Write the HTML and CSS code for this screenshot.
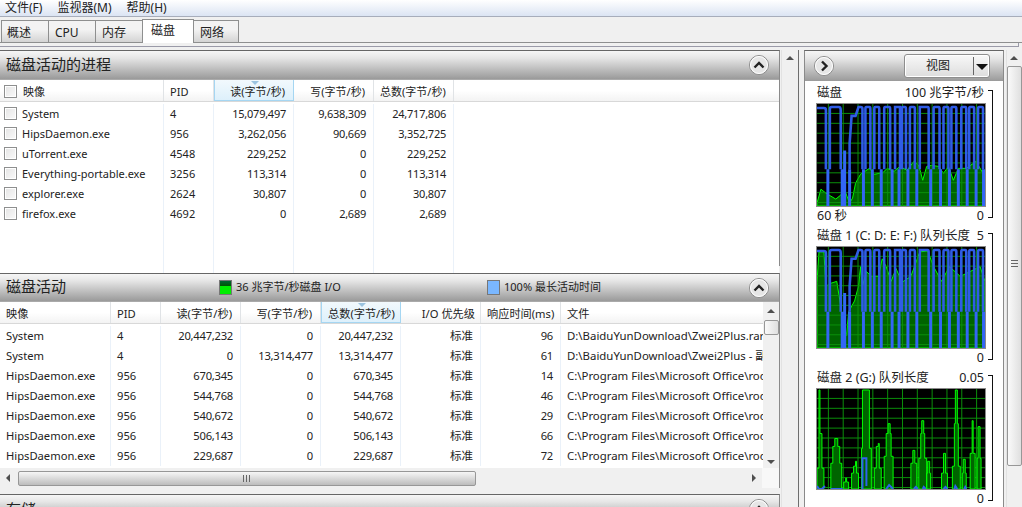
FILE: index.html
```html
<!DOCTYPE html>
<html lang="zh">
<head>
<meta charset="utf-8">
<title>资源监视器</title>
<link rel="stylesheet" href="styles.css">
</head>
<body>
<div class="app">
  <nav class="menu"><span>文件(F)</span><span>监视器(M)</span><span>帮助(H)</span></nav>
  <div class="tabs">
    <span class="tab">概述</span><span class="tab">CPU</span><span class="tab">内存</span><span class="tab active">磁盘</span><span class="tab">网络</span>
  </div>
  <div class="strip"></div>
  <div class="main">
    <div class="left">
      <section class="panel first">
        <header class="phead"><h2>磁盘活动的进程</h2>
          <svg class="circle" viewBox="0 0 20 20"><circle cx="10" cy="10" r="9.500" fill="#e6e6e6" stroke="#8c8c8c"/><circle cx="10" cy="10" r="8.500" fill="none" stroke="#fff"/><path d="M5.500 12.500 10 8 14.500 12.500" fill="none" stroke="#222" stroke-width="2.400"/></svg>
        </header>
        <div class="list procs">
          <div class="row hdr"><b class="c1"><i class="chk"></i>映像</b><b>PID</b><b class="r sorted">读(字节/秒)</b><b class="r">写(字节/秒)</b><b class="r">总数(字节/秒)</b><b></b></div>
          <div class="row"><span class="c1"><i class="chk"></i>System</span><span>4</span><span class="r">15,079,497</span><span class="r">9,638,309</span><span class="r">24,717,806</span><span></span></div>
          <div class="row"><span class="c1"><i class="chk"></i>HipsDaemon.exe</span><span>956</span><span class="r">3,262,056</span><span class="r">90,669</span><span class="r">3,352,725</span><span></span></div>
          <div class="row"><span class="c1"><i class="chk"></i>uTorrent.exe</span><span>4548</span><span class="r">229,252</span><span class="r">0</span><span class="r">229,252</span><span></span></div>
          <div class="row"><span class="c1"><i class="chk"></i>Everything-portable.exe</span><span>3256</span><span class="r">113,314</span><span class="r">0</span><span class="r">113,314</span><span></span></div>
          <div class="row"><span class="c1"><i class="chk"></i>explorer.exe</span><span>2624</span><span class="r">30,807</span><span class="r">0</span><span class="r">30,807</span><span></span></div>
          <div class="row"><span class="c1"><i class="chk"></i>firefox.exe</span><span>4692</span><span class="r">0</span><span class="r">2,689</span><span class="r">2,689</span><span></span></div>
          <div class="row fill"><span></span><span></span><span></span><span></span><span></span><span></span></div>
        </div>
      </section>
      <section class="panel second">
        <header class="phead"><h2>磁盘活动</h2>
          <div class="legend"><i class="sw green"></i>36 兆字节/秒磁盘 I/O</div>
          <div class="legend two"><i class="sw blue"></i>100% 最长活动时间</div>
          <svg class="circle" viewBox="0 0 20 20"><circle cx="10" cy="10" r="9.500" fill="#e6e6e6" stroke="#8c8c8c"/><circle cx="10" cy="10" r="8.500" fill="none" stroke="#fff"/><path d="M5.500 12.500 10 8 14.500 12.500" fill="none" stroke="#222" stroke-width="2.400"/></svg>
        </header>
        <div class="body2">
          <div class="list files">
            <div class="row hdr"><b>映像</b><b>PID</b><b class="r">读(字节/秒)</b><b class="r">写(字节/秒)</b><b class="r sorted">总数(字节/秒)</b><b class="r">I/O 优先级</b><b class="r">响应时间(ms)</b><b>文件</b></div>
            <div class="row"><span>System</span><span>4</span><span class="r">20,447,232</span><span class="r">0</span><span class="r">20,447,232</span><span class="r pri">标准</span><span class="r">96</span><span class="path">D:\BaiduYunDownload\Zwei2Plus.rar</span></div>
            <div class="row"><span>System</span><span>4</span><span class="r">0</span><span class="r">13,314,477</span><span class="r">13,314,477</span><span class="r pri">标准</span><span class="r">61</span><span class="path">D:\BaiduYunDownload\Zwei2Plus - 副本.rar</span></div>
            <div class="row"><span>HipsDaemon.exe</span><span>956</span><span class="r">670,345</span><span class="r">0</span><span class="r">670,345</span><span class="r pri">标准</span><span class="r">14</span><span class="path">C:\Program Files\Microsoft Office\root</span></div>
            <div class="row"><span>HipsDaemon.exe</span><span>956</span><span class="r">544,768</span><span class="r">0</span><span class="r">544,768</span><span class="r pri">标准</span><span class="r">46</span><span class="path">C:\Program Files\Microsoft Office\root</span></div>
            <div class="row"><span>HipsDaemon.exe</span><span>956</span><span class="r">540,672</span><span class="r">0</span><span class="r">540,672</span><span class="r pri">标准</span><span class="r">29</span><span class="path">C:\Program Files\Microsoft Office\root</span></div>
            <div class="row"><span>HipsDaemon.exe</span><span>956</span><span class="r">506,143</span><span class="r">0</span><span class="r">506,143</span><span class="r pri">标准</span><span class="r">66</span><span class="path">C:\Program Files\Microsoft Office\root</span></div>
            <div class="row"><span>HipsDaemon.exe</span><span>956</span><span class="r">229,687</span><span class="r">0</span><span class="r">229,687</span><span class="r pri">标准</span><span class="r">72</span><span class="path">C:\Program Files\Microsoft Office\root</span></div>
          </div>
          <div class="vbar inner"><i class="up"></i><i class="thumb small"></i><i class="down"></i></div>
        </div>
        <div class="hbar"><i class="lf"></i><i class="hthumb"><u></u></i><i class="rt"></i></div>
      </section>
      <section class="panel third">
        <header class="phead"><h2>存储</h2>
          <svg class="circle" viewBox="0 0 20 20"><circle cx="10" cy="10" r="9.500" fill="#e6e6e6" stroke="#8c8c8c"/><circle cx="10" cy="10" r="8.500" fill="none" stroke="#fff"/><path d="M5.500 12.500 10 8 14.500 12.500" fill="none" stroke="#222" stroke-width="2.400"/></svg>
        </header>
      </section>
    </div>
    <div class="vbar outer"><i class="up"></i></div>
    <aside class="right">
      <header class="rhead">
        <svg class="circle" viewBox="0 0 20 20"><circle cx="10" cy="10" r="9.500" fill="#e6e6e6" stroke="#8c8c8c"/><circle cx="10" cy="10" r="8.500" fill="none" stroke="#fff"/><path d="M8 5.500 12.500 10 8 14.500" fill="none" stroke="#222" stroke-width="2.400"/></svg>
        <div class="viewbtn"><span>视图</span><i class="tri"></i></div>
      </header>
      <div class="graphs">
        <div class="graph">
          <div class="lab"><span>磁盘</span><span>100 兆字节/秒</span></div>
          <div class="brk"></div>
          <svg class="chart h1" viewBox="0 0 170 103" preserveAspectRatio="none">
            <defs>
              <pattern id="grid" width="15" height="10" patternUnits="userSpaceOnUse"><path d="M11.500 0V10M0 9.500H15" fill="none" stroke="#0a8f0a"/></pattern>
              <g id="wave" fill="none" stroke="#2f5ce6" stroke-width="2.600">
                <path d="M0,4H7Q9,4 9,6V66M13,66V5Q13,3 15,3H22Q24,3 24,6V66M33,66V40L35,12H39L42,3H44Q46,3 46,5V66M49,66V5Q49,3 50,3H53Q54,3 54,5V66M58,66V5Q58,3 59,3H62Q63,3 63,5V66M68,66V5Q68,3 69,3H73Q74,3 74,5V66M79,66V3H84V66M86,66V5Q86,3 87,3H89Q90,3 90,5V66M94,66V5Q94,3 95,3H98Q99,3 99,5V66M104,66V3H112Q113,3 113,5V66M118,66V5Q118,3 119,3H123Q124,3 124,5V66M128,66V5Q128,3 129,3H132Q133,3 133,5V66M136,66V5Q136,3 137,3H140Q141,3 141,5V66M146,66V5Q146,3 147,3H150Q151,3 151,5V66M154,66V5Q154,3 155,3H158Q159,3 159,5V66M163,66V5Q163,3 164,3H167Q168,3 168,5V66"/>
                <path d="M11,66V103M25.500,66V103M28,47V103M33,66V103M47,66V103M56,66V103M65,66V103M76,66V103M83,66V103M92,66V103M101,66V103M115,66V103M125,66V103M134,66V103M143,66V103M152,66V103M161,66V103M168.500,66V103" stroke-width="3" stroke="#3366f5"/>
              </g>
            </defs>
            <rect class="bg" width="170" height="103"/>
            <polygon class="area" points="0,100 4,86 9,90 14,93 19,96 24,92 28,87 33,100 36,95 39,80 44,71 53,65 58,71 63,70 66,70 71,65 78,68 84,63 91,67 98,58 103,62 107,77 111,63 116,62 123,63 128,70 133,63 138,77 143,65 151,65 161,58 168,70 170,103 0,103"/>
            <rect width="170" height="103" fill="url(#grid)"/>
            <use href="#wave"/>
          </svg>
          <div class="lab foot"><span>60 秒</span><span>0</span></div>
        </div>
        <div class="graph">
          <div class="lab"><span>磁盘 1 (C: D: E: F:) 队列长度</span><span>5</span></div>
          <div class="brk"></div>
          <svg class="chart h2" viewBox="0 0 170 103" preserveAspectRatio="none">
            <rect class="bg" width="170" height="103"/>
            <polygon class="area" points="0,36 2,5 7,5 9,40 14,37 20,35 24,60 26,80 28,92 30,90 32,66 38,55 42,40 44,20 46,40 50,25 55,30 62,30 66,12 70,20 75,35 80,22 86,36 95,30 104,5 112,4 118,20 126,35 134,20 145,30 155,25 165,20 170,35 170,103 0,103"/>
            <rect width="170" height="103" fill="url(#grid)"/>
            <use href="#wave"/>
          </svg>
          <div class="lab foot"><span></span><span>0</span></div>
        </div>
        <div class="graph">
          <div class="lab"><span>磁盘 2 (G:) 队列长度</span><span>0.05</span></div>
          <div class="brk"></div>
          <svg class="chart h3" viewBox="0 0 170 101" preserveAspectRatio="none">
            <rect class="bg" width="170" height="101"/>
            <rect width="170" height="101" fill="url(#grid)"/>
            <path class="spikes" d="M0,101V80H2V1H3V45H5V80H7V101ZM14,101V75H16V58H18V50H21V58H23V75H25V101ZM27,101V94H29V90H30V94H32V101ZM35,101V85H37V78H39V73H40V85H42V101ZM45,101V60H46V1H53V60H55V101ZM58,101V80H60V58H62V55H63V80H65V101ZM68,101V68H70V45H72V35H74V45H75V68H77V101ZM95,101V75H97V62H99V75H101V101ZM103,101V70H105V45H106V32H108V45H109V70H111V101ZM111,101V85H112V73H114V85H115V101ZM126,101V85H128V65H130V85H132V101ZM137,101V78H139V35H140V1H142V35H143V78H145V101ZM147,101V85H148V71H150V85H151V101ZM155,101V65H157V32H158V65H160V101ZM162,101V70H163V38H165V70H166V101Z"/>
            <path d="M0,98L2,101H5L8,98M14,101H26M46,101V70H50V98M70,101L73,97L77,101M98,101L100,99L102,101M107,101L108,99L110,101M128,101L130,99L132,101M139,101L140,98L142,101M149,101L150,99L151,101" fill="none" stroke="#2f62ee" stroke-width="2"/>
          </svg>
          <div class="lab foot"><span></span><span>0</span></div>
        </div>
      </div>
    </aside>
    <div class="vbar outer far"><i class="up"></i><i class="thumb big"><u></u></i></div>
  </div>
</div>
</body>
</html>
```
FILE: styles.css
```css
*{box-sizing:border-box}
html,body{margin:0;padding:0;height:100%;overflow:hidden}
body{font:12px/16px "Noto Sans","Noto Sans CJK SC",sans-serif;color:#222;background:#f0f0f0}
.app{width:1022px;height:507px;display:flex;flex-direction:column;overflow:hidden}
.menu{height:17px;display:flex;gap:15px;padding:0 0 0 5px;line-height:15px;background:linear-gradient(#fff,#dbe4f3);border-bottom:1px solid #a7adbb;flex:none}
.tabs{height:26px;padding:3px 0 0 1px;display:flex;align-items:flex-end;border-bottom:1px solid #8e8f8f;flex:none}
.tab{height:22px;padding:0 6px;min-width:48px;border:1px solid #8e8f8f;border-bottom:0;background:linear-gradient(#f3f3f3 40%,#d4d4d4);line-height:23px;margin-left:-1px}
.tab.active{height:24px;width:52px;background:#fff;margin-bottom:-1px;position:relative;line-height:22px;padding-left:8px}
.tab:first-child{margin-left:0;padding-left:5px}
.tab:last-child{width:46px;min-width:0}
.strip{height:4px;margin-right:3px;border-bottom:1px solid #9a9aa8;border-right:1px solid #9a9aa8;flex:none}
.main{flex:1;display:flex;min-height:0;padding-top:3px;overflow:hidden}
.left{width:780px;flex:none;display:flex;flex-direction:column;gap:7px}
.panel{border:1px solid #8a8a8a;border-left:0;border-top:1px solid #666;background:#fff;flex:none}
.first{height:216px}
.second{height:215px}
.third{height:60px;margin-top:-1px}
.phead{height:28px;display:flex;align-items:center;position:relative;padding:0 10px 0 6px;background:linear-gradient(#f6f6f6,#e6e6e6 25%,#9a9a9a);border-bottom:1px solid #aaa}
.first .phead{height:29px}
.phead h2{margin:0;font-size:15px;font-weight:400;color:#222}
.first h2{margin-top:-2px}
.second h2{margin-top:-3px}
.circle{width:20px;height:20px;flex:none;margin-left:auto}
.legend{position:absolute;left:219px;top:5px;display:flex;align-items:center;font-size:11px;line-height:16px}
.legend.two{left:487px}
.sw{width:13px;height:15px;margin-right:4px;border:1px solid #fff;outline:1px solid #777;outline-offset:-1px}
.green{background:linear-gradient(#063 0,#050 40%,#0e0 40%)}
.blue{background:#7ab7ff}
.list{background:#fff;overflow:hidden}
.row{display:grid;height:20px;line-height:20px}
.procs .row{grid-template-columns:164px 50px 80px 80px 80px 1fr}
.files{flex:1;min-width:0}
.files .row{grid-template-columns:111px 50px 80px 80px 80px 80px 80px 1fr}
.row>*{font-weight:400;font-size:11px;padding:0 6px;white-space:nowrap;overflow:hidden;border-right:1px solid #eaf1f9}
.files .row>*{font-size:11.200px}
.row>:last-child{border-right:0}
.row .r{text-align:right;padding-right:7px;letter-spacing:-.25px}
.files .row .pri{font-size:11.500px;letter-spacing:0}
.files .row .path{font-size:11.400px}
.row.hdr{height:22px;line-height:23px;margin-bottom:2px;background:linear-gradient(#fff 50%,#f3f3f3);border-bottom:1px solid #d8d8d8}
.hdr>*{border-right:1px solid #e0e3e6}
.hdr>.r{letter-spacing:0;padding-right:8px}
.files .hdr>:nth-child(6){padding-right:5px}
.hdr>.sorted{background:linear-gradient(#f2f9fd,#ddf0fb);border:1px solid #a5d6f2;border-top:0;position:relative}
.sorted::before{content:"";position:absolute;left:36px;top:1px;border:4px solid transparent;border-top:4px solid #9cc4e0;border-bottom:0}
.row.fill{height:164px;line-height:normal}
.procs .row:not(.hdr):not(.fill)>:first-child{padding-left:22px;position:relative}
.hdr .c1{padding-left:23px;position:relative}
.chk{position:absolute;left:4px;top:3px;width:13px;height:13px;border:1px solid #8e8f8f;background:linear-gradient(135deg,#e4e4e4,#fafafa);box-shadow:inset 0 0 0 1px #fff}
.hdr .chk{top:5px}
.body2{display:flex;height:166px}
.vbar{background:#f0f0f0;flex:none;display:flex;flex-direction:column;align-items:center;position:relative}
.vbar.inner{width:16px;padding-top:7px}
.outer{width:18px;margin-left:1px;padding-top:6px;border-right:1px solid #6e6e6e;box-shadow:inset 1px 0 #e2e2e2}
.far{margin-left:2px;border-right:0;width:16px}
.up{width:0;height:0;border:4px solid transparent;border-bottom:4px solid #4f4f4f;border-top:0;flex:none}
.down{width:0;height:0;border:4px solid transparent;border-top:4px solid #4f4f4f;border-bottom:0;position:absolute;bottom:4px}
.thumb{display:block;width:15px;border:1px solid #979797;border-radius:2px;background:linear-gradient(90deg,#fafafa,#dfdfdf)}
.thumb.small{height:15px;margin-top:7px}
.thumb.big{height:400px;margin-top:6px;position:relative}
.thumb u{position:absolute;left:3px;top:193px;width:7px;height:7px;border-top:1px solid #666;border-bottom:1px solid #666}
.thumb u::after{content:"";position:absolute;left:0;right:0;top:2px;height:1px;background:#666}
.hbar{height:20px;background:linear-gradient(90deg,#f0f0f0 762px,#f8f8f8 762px);position:relative;display:flex;align-items:center;padding-left:18px}
.lf{position:absolute;left:6px;top:6px;border:4px solid transparent;border-right:4px solid #4f4f4f;border-left:0}
.rt{position:absolute;left:752px;top:6px;border:4px solid transparent;border-left:4px solid #4f4f4f;border-right:0}
.hthumb{display:block;width:458px;height:15px;border:1px solid #979797;border-radius:2px;background:linear-gradient(#f6f6f6,#d4d4d4 60%,#bcbcbc);position:relative}
.hthumb u{position:absolute;left:224px;top:3px;width:7px;height:7px;border-left:1px solid #666;border-right:1px solid #666}
.hthumb u::after{content:"";position:absolute;left:2px;top:0;bottom:0;width:1px;background:#666}
.right{width:200px;margin-left:5px;flex:none;background:#fff;border:1px solid #8a8a8a;border-top:1px solid #666;border-bottom:0;height:460px}
.rhead{height:30px;display:flex;align-items:center;padding:0 13px 0 9px;background:linear-gradient(#f6f6f6,#e6e6e6 25%,#9a9a9a)}
.rhead .circle{margin:0 auto 0 0}
.viewbtn{width:86px;height:24px;border:1px solid #8e8e8e;border-radius:3px;background:linear-gradient(#f8f8f8,#ddd);display:flex;align-items:center;position:relative;padding-left:21px;box-shadow:inset 0 0 0 1px #fff}
.viewbtn::after{content:"";position:absolute;left:68px;top:2px;bottom:2px;width:1px;background:#666}
.tri{position:absolute;left:71px;top:9px;border:6px solid transparent;border-top:6px solid #111;border-bottom:0}
.graphs{padding:3px 0 0 11px;display:flex;flex-direction:column}
.graph{display:grid;grid-template-columns:170px 6px;height:142px;grid-template-rows:19px auto 20px;align-content:start}
.graph:first-child{margin-bottom:1px}
.lab{display:flex;justify-content:space-between;padding:0 2px 0 1px;font-size:12.500px;line-height:18px;grid-column:1}
.brk{grid-column:2;grid-row:1/4;margin:6px 0 9px 2px;border:1px solid #111;border-left:0;width:5px}
.chart{display:block;width:170px;border:1px solid #8a8a8a;grid-column:1;grid-row:2}
.h1{height:104px}
.h2{height:103px}
.h3{height:102px}
.foot{grid-row:3}
.bg{fill:#000}
.area{fill:#006400;stroke:#0f0;stroke-width:1}
.spikes{fill:#006400;stroke:#0f0;stroke-width:1}
```
